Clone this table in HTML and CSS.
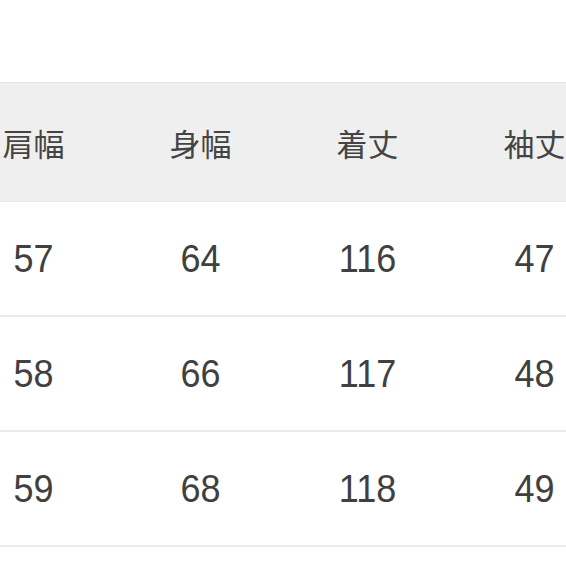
FILE: index.html
```html
<!DOCTYPE html>
<html lang="ja">
<head>
<meta charset="utf-8">
<link rel="stylesheet" href="styles.css">
</head>
<body>
<div class="table">
  <div class="row head">
    <div class="cell">肩幅</div>
    <div class="cell">身幅</div>
    <div class="cell">着丈</div>
    <div class="cell">袖丈</div>
  </div>
  <div class="row">
    <div class="cell num">57</div>
    <div class="cell num">64</div>
    <div class="cell num">116</div>
    <div class="cell num">47</div>
  </div>
  <div class="row">
    <div class="cell num">58</div>
    <div class="cell num">66</div>
    <div class="cell num">117</div>
    <div class="cell num">48</div>
  </div>
  <div class="row">
    <div class="cell num">59</div>
    <div class="cell num">68</div>
    <div class="cell num">118</div>
    <div class="cell num">49</div>
  </div>
  <div class="row last"></div>
</div>
</body>
</html>
```

FILE: styles.css
```css
html, body {
  margin: 0;
  padding: 0;
  background: #ffffff;
  overflow: hidden;
  width: 566px;
  height: 566px;
}
.table {
  margin-top: 82px;
  margin-left: -50px;
  width: 668px;
  font-family: "Liberation Sans", "Noto Sans CJK JP", sans-serif;
  color: #404040;
}
.row {
  display: grid;
  grid-template-columns: repeat(4, 167px);
  align-items: center;
  justify-items: center;
  height: 115px;
  box-sizing: border-box;
  border-bottom: 2px solid #ebebeb;
}
.head {
  height: 120px;
  background: #efefef;
  border-top: 1px solid #e4e4e4;
  border-bottom: 1px solid #e9e9e9;
  font-family: "Noto Sans CJK JP", sans-serif;
  font-size: 31px;
  color: #444444;
}
.cell {
  line-height: 1;
}
.num {
  font-size: 36px;
  transform: scaleY(1.09);
}
.last {
  border-bottom: none;
}
```
